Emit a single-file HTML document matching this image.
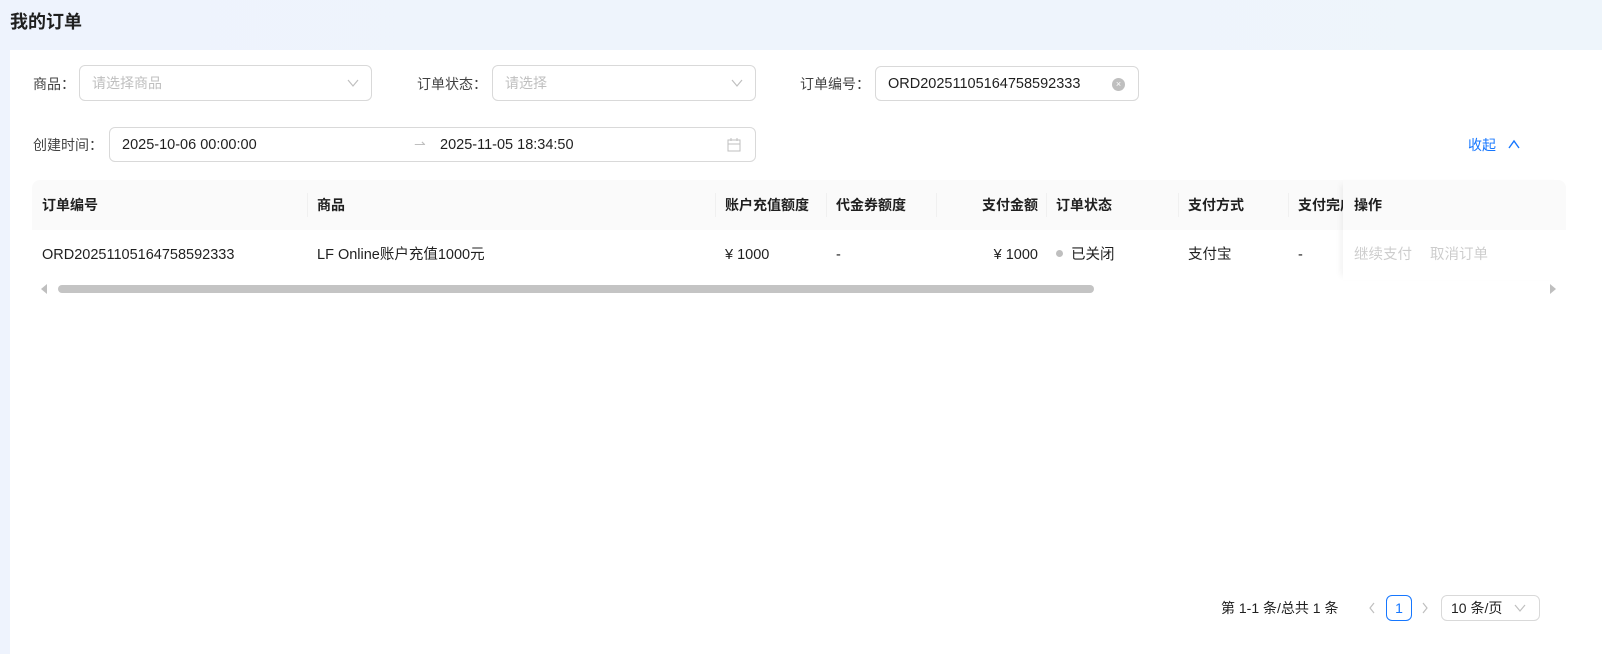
<!DOCTYPE html>
<html><head><meta charset="utf-8"><style>
*{margin:0;padding:0;box-sizing:border-box}
body{width:1602px;height:654px;overflow:hidden;background:linear-gradient(90deg,#eef3fd,#eef5fb);font-family:"Liberation Sans","Noto Sans CJK SC",sans-serif;font-size:14px;color:rgba(0,0,0,.88);position:relative}
.a{position:absolute}
h1{position:absolute;left:10px;top:8px;font-size:18px;font-weight:bold;color:#1f1f1f;font-family:"Noto Sans CJK SC",sans-serif}
.panel{position:absolute;left:10px;top:50px;right:0;bottom:0;background:#fff}
.lbl{position:absolute;font-size:14px;color:rgba(0,0,0,.75);line-height:22px}
.box{position:absolute;border:1px solid #d9d9d9;border-radius:6px;background:#fff;height:36px}
.ph{position:absolute;color:#bfbfbf;line-height:34px;left:12px}
.val{position:absolute;line-height:34px;color:rgba(0,0,0,.88);font-size:14.5px}
.th{position:absolute;top:180px;height:50px;line-height:50px;font-weight:bold;color:rgba(0,0,0,.88);padding-left:10px;font-family:"Noto Sans CJK SC",sans-serif;font-size:14px}
.td{position:absolute;top:230px;height:50px;line-height:50px;padding-left:10px;font-size:14.5px}
.sep{position:absolute;top:193px;width:1px;height:24px;background:#f0f0f0}
</style></head><body>
<h1>我的订单</h1>
<div class="panel"></div>

<div class="lbl" style="left:33px;top:73px">商品：</div>
<div class="box" style="left:79px;top:65px;width:293px"><span class="ph">请选择商品</span>
<svg class="a" style="right:12px;top:12px" width="12" height="10" viewBox="0 0 12 10"><path d="M1 2l5 6 5-6" fill="none" stroke="#bfbfbf" stroke-width="1.2"/></svg></div>
<div class="lbl" style="left:417px;top:73px">订单状态：</div>
<div class="box" style="left:492px;top:65px;width:264px"><span class="ph">请选择</span>
<svg class="a" style="right:12px;top:12px" width="12" height="10" viewBox="0 0 12 10"><path d="M1 2l5 6 5-6" fill="none" stroke="#bfbfbf" stroke-width="1.2"/></svg></div>
<div class="lbl" style="left:800px;top:73px">订单编号：</div>
<div class="box" style="left:875px;top:66px;width:264px;height:35px"><span class="val" style="left:12px">ORD20251105164758592333</span>
<span class="a" style="right:13px;top:11px;width:13px;height:13px;border-radius:50%;background:#bfbfbf;color:#fff;font-size:9px;line-height:13px;text-align:center">×</span></div>

<div class="lbl" style="left:33px;top:134px">创建时间：</div>
<div class="box" style="left:109px;top:127px;width:647px;height:35px"><span class="val" style="left:12px">2025-10-06 00:00:00</span>
<span class="a" style="left:304px;top:8px;color:#bfbfbf">⇀</span>
<span class="val" style="left:330px">2025-11-05 18:34:50</span>
<svg class="a" style="right:14px;top:9px" width="14" height="16" viewBox="0 0 14 16"><rect x="1" y="3" width="12" height="11" fill="none" stroke="#bfbfbf"/><path d="M1 7h12M4 1v3M10 1v3" stroke="#bfbfbf"/></svg></div>
<div class="a" style="left:1468px;top:134px;color:#1677ff;line-height:22px">收起</div>
<svg class="a" style="left:1507px;top:138px" width="14" height="12" viewBox="0 0 14 12"><path d="M2 10l5-7 5 7" fill="none" stroke="#1677ff" stroke-width="1.4"/></svg>

<div class="a" style="left:32px;top:180px;width:1534px;height:50px;background:#fafafa;border-radius:8px 8px 0 0"></div>
<div class="th" style="left:32px">订单编号</div>
<div class="th" style="left:307px">商品</div>
<div class="th" style="left:715px">账户充值额度</div>
<div class="th" style="left:826px">代金券额度</div>
<div class="th" style="left:936px;width:110px;text-align:right;padding-right:8px">支付金额</div>
<div class="th" style="left:1046px">订单状态</div>
<div class="th" style="left:1178px">支付方式</div>
<div class="th" style="left:1288px;width:55px;overflow:hidden;white-space:nowrap">支付完成</div>
<div class="sep" style="left:307px"></div><div class="sep" style="left:715px"></div><div class="sep" style="left:826px"></div><div class="sep" style="left:936px"></div><div class="sep" style="left:1046px"></div><div class="sep" style="left:1178px"></div><div class="sep" style="left:1288px"></div>
<div class="a" style="left:1343px;top:180px;width:223px;height:100px;box-shadow:-6px 0 6px -4px rgba(0,0,0,.06)"><div style="height:50px;background:#fafafa;border-radius:0 8px 0 0"></div><div style="height:50px;background:#fff"></div></div>
<div class="th" style="left:1344px">操作</div>
<div class="td" style="left:32px">ORD20251105164758592333</div>
<div class="td" style="left:307px">LF Online账户充值1000元</div>
<div class="td" style="left:715px">¥ 1000</div>
<div class="td" style="left:826px">-</div>
<div class="td" style="left:936px;width:110px;text-align:right;padding-right:8px">¥ 1000</div>
<div class="td" style="left:1046px"><span style="display:inline-block;width:7px;height:7px;border-radius:50%;background:#bfbfbf;margin-right:8px;vertical-align:middle;position:relative;top:-2px"></span>已关闭</div>
<div class="td" style="left:1178px">支付宝</div>
<div class="td" style="left:1288px">-</div>
<div class="td" style="left:1344px;color:rgba(0,0,0,.2)">继续支付<span style="margin-left:18px">取消订单</span></div>

<svg class="a" style="left:40px;top:284px" width="8" height="10"><path d="M7 0v10L1 5z" fill="#bfbfbf"/></svg>
<div class="a" style="left:58px;top:285px;width:1036px;height:8px;border-radius:4px;background:#c4c4c4"></div>
<svg class="a" style="left:1549px;top:284px" width="8" height="10"><path d="M1 0v10l6-5z" fill="#bfbfbf"/></svg>

<div class="a" style="left:1221px;top:597px;line-height:22px">第 1-1 条/总共 1 条</div>
<svg class="a" style="left:1367px;top:601px" width="10" height="14"><path d="M7 2L3 7l4 5" fill="none" stroke="#bfbfbf" stroke-width="1.2"/></svg>
<div class="a" style="left:1386px;top:595px;width:26px;height:26px;border:1px solid #1677ff;border-radius:6px;color:#1677ff;text-align:center;line-height:24px">1</div>
<svg class="a" style="left:1420px;top:601px" width="10" height="14"><path d="M3 2l4 5-4 5" fill="none" stroke="#bfbfbf" stroke-width="1.2"/></svg>
<div class="a" style="left:1441px;top:595px;width:99px;height:26px;border:1px solid #d9d9d9;border-radius:6px;line-height:24px;padding-left:9px">10 条/页</div>
<svg class="a" style="left:1514px;top:603px" width="12" height="10"><path d="M1 2l5 6 5-6" fill="none" stroke="#bfbfbf" stroke-width="1.2"/></svg>
</body></html>
